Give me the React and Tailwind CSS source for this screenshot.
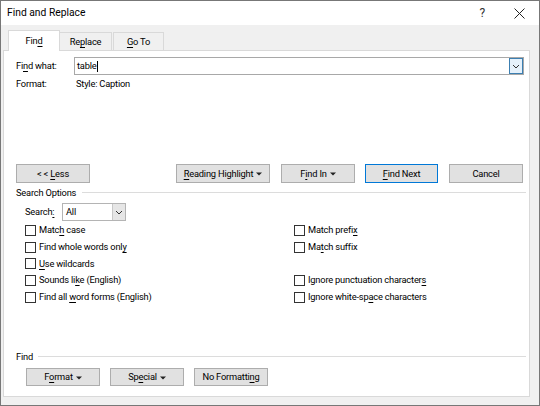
import React from "react";

const font = { fontFamily: "Roboto, 'Liberation Sans', sans-serif" };

function U({ children }) {
    return <span className="underline underline-offset-[1.5px] decoration-[0.8px]">{children}</span>;
}

function Caret() {
    return (
        <svg width="6" height="4" viewBox="0 0 6 4" className="ml-[3px] inline-block align-middle">
            <path d="M0 0.5 L6 0.5 L3 3.5 Z" fill="#222" />
        </svg>
    );
}

function Chevron() {
    return (
        <svg width="8" height="5" viewBox="0 0 8 5">
            <polyline points="1,1 4,4 7,1" fill="none" stroke="#333" strokeWidth="1" />
        </svg>
    );
}

function Btn({ children, w = "w-[74px]", h = "h-[19px]", primary }) {
    return (
        <div
            className={
                "flex items-center justify-center shrink-0 bg-[#e1e1e1] border text-black " +
                w + " " + h + " " +
                (primary ? "border-[#0078d7]" : "border-[#adadad]")
            }
        >
            <span className="whitespace-pre">{children}</span>
        </div>
    );
}

function Check({ children }) {
    return (
        <div className="flex items-center h-[16.7px]">
            <div className="w-[11px] h-[11px] border border-[#333] bg-white shrink-0" />
            <span className="ml-[3px] whitespace-pre">{children}</span>
        </div>
    );
}

function GroupLabel({ children, lineLeft }) {
    return (
        <div className="flex items-center h-[13px] pl-[12px] pr-[3px]">
            <span className="shrink-0">{children}</span>
            <div className={"flex-1 h-px bg-[#dcdcdc] " + lineLeft} />
        </div>
    );
}

export default function App() {
    return (
        <div className="w-[540px] h-[406px] bg-[#f0f0f0] border border-[#777] flex flex-col text-[9.3px] tracking-[-0.2px] text-black overflow-hidden" style={font}>
            {/* title bar */}
            <div className="h-[24px] bg-white flex items-center pl-[6px] shrink-0">
                <span className="text-[10.3px] tracking-normal">Find and Replace</span>
                <div className="flex-1" />
                <span className="text-[12px] text-[#333] mr-[29px]">?</span>
                <svg width="11" height="11" viewBox="0 0 11 11" className="mr-[14px]">
                    <path d="M0.5 0.5 L10.5 10.5 M10.5 0.5 L0.5 10.5" stroke="#222" strokeWidth="1" />
                </svg>
            </div>

            {/* tabs */}
            <div className="h-[25px] flex items-end pl-[7px] shrink-0 relative z-10">
                <div className="w-[52px] h-[21px] bg-white border border-b-0 border-[#d9d9d9] flex items-center justify-center mb-[-1px]">
                    <span>Fin<U>d</U></span>
                </div>
                <div className="w-[52px] h-[18px] border-t border-r border-[#d9d9d9] flex items-center justify-center">
                    <span>Re<U>p</U>lace</span>
                </div>
                <div className="w-[51px] h-[18px] border-t border-r border-l border-[#d9d9d9] flex items-center justify-center ml-[1px]">
                    <span><U>G</U>o To</span>
                </div>
            </div>

            {/* panel */}
            <div className="ml-[2px] w-[527px] h-[347px] bg-white border border-[#d9d9d9] flex flex-col shrink-0">
                <div className="flex items-center mt-[6px] h-[18px] pl-[12px]">
                    <span className="w-[58px] shrink-0">Fi<U>n</U>d what:</span>
                    <div className="w-[450px] h-[18px] border border-[#a8a8a8] flex items-center pl-[2px]">
                        <span>table</span>
                        <span className="w-px h-[11px] bg-black" />
                        <div className="flex-1" />
                        <div className="w-[14px] h-[16px] bg-[#e5f1fb] border border-[#3c7fb1] flex items-center justify-center">
                            <Chevron />
                        </div>
                    </div>
                </div>
                <div className="flex items-center h-[14px] mt-[2px] pl-[12px]">
                    <span className="w-[60px] shrink-0">Format:</span>
                    <span>Style: Caption</span>
                </div>

                <div className="flex items-center mt-[73px] pl-[12px]">
                    <Btn>{"< < "}<U>L</U>ess</Btn>
                    <div className="ml-[86px]">
                        <Btn w="w-[94px]"><U>R</U>eading Highlight<Caret /></Btn>
                    </div>
                    <div className="ml-[11px]">
                        <Btn>F<U>i</U>nd In<Caret /></Btn>
                    </div>
                    <div className="ml-[10px]">
                        <Btn w="w-[73px]" primary><U>F</U>ind Next</Btn>
                    </div>
                    <div className="ml-[11px]">
                        <Btn>Cancel</Btn>
                    </div>
                </div>

                <div className="mt-[3px]">
                    <GroupLabel lineLeft="ml-[6px]">Search Options</GroupLabel>
                </div>

                <div className="flex items-center mt-[4px] pl-[21px] h-[18px]">
                    <span className="w-[37px] shrink-0">Search<U>:</U></span>
                    <div className="w-[64px] h-[18px] border border-[#b4b4b4] flex items-center pl-[3px]">
                        <span className="flex-1">All</span>
                        <div className="w-[13px] h-[16px] bg-[#e6e6e6] border-l border-[#c8c8c8] flex items-center justify-center">
                            <Chevron />
                        </div>
                    </div>
                </div>

                <div className="grid grid-cols-[269px_1fr] pl-[21px] mt-[1px]">
                    <div className="flex flex-col">
                        <Check>Matc<U>h</U> case</Check>
                        <Check>Find whole words onl<U>y</U></Check>
                        <Check><U>U</U>se wildcards</Check>
                        <Check>Sounds li<U>k</U>e (English)</Check>
                        <Check>Find all <U>w</U>ord forms (English)</Check>
                    </div>
                    <div className="flex flex-col">
                        <Check>Match prefi<U>x</U></Check>
                        <Check>Ma<U>t</U>ch suffix</Check>
                        <div className="h-[16.7px]" />
                        <Check>Ignore punctuation character<U>s</U></Check>
                        <Check>Ignore white-sp<U>a</U>ce characters</Check>
                    </div>
                </div>

                <div className="mt-[45px]">
                    <GroupLabel lineLeft="ml-[5px]">Find</GroupLabel>
                </div>

                <div className="flex items-center mt-[5px] pl-[22px] gap-[10px]">
                    <Btn h="h-[18px]">F<U>o</U>rmat<Caret /></Btn>
                    <Btn h="h-[18px]">Sp<U>e</U>cial<Caret /></Btn>
                    <Btn h="h-[18px]">No Formatti<U>n</U>g</Btn>
                </div>
            </div>
        </div>
    );
}
